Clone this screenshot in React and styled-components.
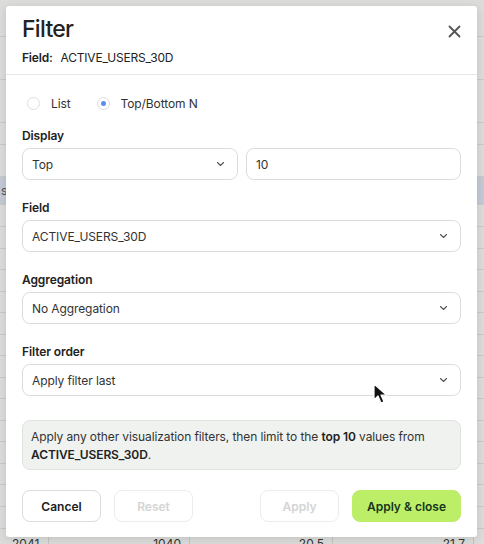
import styled, { createGlobalStyle } from "styled-components";

const GlobalStyle = createGlobalStyle`
  html, body {
    margin: 0;
    padding: 0;
    background: #dcddda;
    font-family: Inter, "Noto Sans", sans-serif;
    -webkit-font-smoothing: antialiased;
  }
  * { box-sizing: border-box; }
`;

// the data table that sits behind the dimmed overlay
const rowHeights = [37, 43, 43, 22, 32, 28, 22, 22, 21, 22, 21, 22, 21, 22, 21, 22, 21, 22, 21, 22, 22];

const Page = styled.div`
  position: relative;
  width: 484px;
  height: 544px;
  overflow: hidden;
  background: #dcddda;
`;

const Table = styled.div`
  display: flex;
  flex-direction: column;
  width: 100%;
`;

const TableRow = styled.div`
  height: ${(p) => p.$h}px;
  flex-shrink: 0;
  border-bottom: 1px solid #cacbc7;
  background: ${(p) => (p.$selected ? "#c4cad6" : "transparent")};
  font-size: 12px;
  color: #555;
  padding-left: 1px;
  display: flex;
  align-items: center;
`;

const FootRow = styled.div`
  position: absolute;
  left: 0;
  top: 532px;
  display: grid;
  grid-template-columns: 49px 141px 143px 141px 10px;
  height: 20px;
  font-size: 12px;
  color: #333;
`;

const FootCell = styled.div`
  border-right: 1px solid #c4c5c1;
  text-align: ${(p) => (p.$left ? "left" : "right")};
  padding: 4px 8px 0 12px;
`;

const Modal = styled.div`
  position: absolute;
  left: 6px;
  top: 6px;
  width: 471px;
  height: 531px;
  background: #fff;
  border-radius: 3px;
  box-shadow: 0 2px 10px rgba(0, 0, 0, 0.12);
  display: flex;
  flex-direction: column;
`;

const Header = styled.div`
  position: relative;
  padding: 8px 16px 8px;
  border-bottom: 1px solid #e6e6e6;
`;

const Title = styled.h1`
  margin: 0;
  font-size: 23px;
  line-height: 30px;
  font-weight: 500;
  color: #222;
  letter-spacing: -0.7px;
`;

const FieldLine = styled.div`
  margin-top: 6px;
  font-size: 12px;
  line-height: 16px;
  color: #222;
  display: flex;
  gap: 8px;
  letter-spacing: -0.2px;

  b {
    font-weight: 600;
  }
`;

const CloseButton = styled.button`
  position: absolute;
  right: 14px;
  top: 16px;
  width: 18px;
  height: 18px;
  padding: 0;
  border: none;
  background: transparent;
  display: flex;
  align-items: center;
  justify-content: center;
  cursor: pointer;
`;

const Body = styled.div`
  padding: 18px 16px 15px;
  display: flex;
  flex-direction: column;
  flex: 1;
  font-size: 12px;
  letter-spacing: -0.1px;
`;

const RadioRow = styled.div`
  display: flex;
  align-items: center;
  height: 20px;
  padding-left: 5px;
  gap: 26px;
  margin-bottom: 15px;
`;

const RadioOption = styled.label`
  display: flex;
  align-items: center;
  gap: 11px;
  font-size: 12px;
  color: #333;
`;

const RadioDot = styled.span`
  width: 13px;
  height: 13px;
  border-radius: 50%;
  border: 1px solid #dedede;
  background: #fff;
  display: flex;
  align-items: center;
  justify-content: center;

  &::after {
    content: "";
    width: 5px;
    height: 5px;
    border-radius: 50%;
    background: ${(p) => (p.$checked ? "#5b8ef0" : "transparent")};
  }
`;

const Group = styled.div`
  display: flex;
  flex-direction: column;
  gap: 4px;
  margin-bottom: 20px;
`;

const Label = styled.div`
  font-size: 12px;
  line-height: 16px;
  font-weight: 600;
  color: #222;
`;

const InputRow = styled.div`
  display: grid;
  grid-template-columns: 216px 215px;
  gap: 8px;
`;

const SelectBox = styled.div`
  height: 32px;
  border: 1px solid #dcdcdc;
  border-radius: 8px;
  padding: 0 12px 0 9px;
  display: flex;
  align-items: center;
  justify-content: space-between;
  font-size: 12px;
  color: #333;
  background: #fff;
`;

const Note = styled.div`
  margin-top: 4px;
  border: 1px solid #e0e2de;
  background: #f0f2ef;
  border-radius: 8px;
  padding: 7px 8px 5px;
  font-size: 12px;
  line-height: 18px;
  color: #333;

  b {
    font-weight: 600;
    color: #222;
  }
`;

const Footer = styled.div`
  margin-top: 20px;
  display: flex;
  gap: 13px;
`;

const Spacer = styled.div`
  flex: 1;
`;

const Button = styled.button`
  height: 32px;
  width: ${(p) => p.$w || 79}px;
  border-radius: 8px;
  font-family: inherit;
  font-size: 12px;
  font-weight: 600;
  padding: 0;
  border: 1px solid ${(p) => (p.$primary ? "#bdee68" : p.$disabled ? "#ececec" : "#dcdcdc")};
  background: ${(p) => (p.$primary ? "#bdee68" : "#fff")};
  color: ${(p) => (p.$primary ? "#15361b" : p.$disabled ? "#d4d4d4" : "#222")};
  cursor: ${(p) => (p.$disabled ? "default" : "pointer")};
`;

const Pointer = styled.svg`
  position: absolute;
  left: 373px;
  top: 383px;
`;

function Chevron() {
  return (
    <svg width="9" height="6" viewBox="0 0 9 6">
      <path d="M1.5 1.5l3 3 3-3" fill="none" stroke="#555" strokeWidth="1.1" strokeLinecap="round" strokeLinejoin="round" />
    </svg>
  );
}

function Select({ value }) {
  return (
    <SelectBox>
      <span>{value}</span>
      <Chevron />
    </SelectBox>
  );
}

export default function App() {
  return (
    <Page>
      <GlobalStyle />
      <Table>
        {rowHeights.map((h, i) => (
          <TableRow key={i} $h={h} $selected={i === 5}>
            {i === 5 ? "s..." : ""}
          </TableRow>
        ))}
      </Table>
      <FootRow>
        <FootCell $left>2041</FootCell>
        <FootCell>1040</FootCell>
        <FootCell>20.5</FootCell>
        <FootCell>21.7</FootCell>
      </FootRow>

      <Modal>
        <Header>
          <Title>Filter</Title>
          <FieldLine>
            <b>Field:</b>
            <span>ACTIVE_USERS_30D</span>
          </FieldLine>
          <CloseButton aria-label="Close">
            <svg width="13" height="13" viewBox="0 0 13 13">
              <path d="M1.5 1.5l10 10M11.5 1.5l-10 10" stroke="#555" strokeWidth="1.8" strokeLinecap="round" />
            </svg>
          </CloseButton>
        </Header>

        <Body>
          <RadioRow>
            <RadioOption>
              <RadioDot />
              List
            </RadioOption>
            <RadioOption>
              <RadioDot $checked />
              Top/Bottom N
            </RadioOption>
          </RadioRow>

          <Group>
            <Label>Display</Label>
            <InputRow>
              <Select value="Top" />
              <SelectBox>10</SelectBox>
            </InputRow>
          </Group>

          <Group>
            <Label>Field</Label>
            <Select value="ACTIVE_USERS_30D" />
          </Group>

          <Group>
            <Label>Aggregation</Label>
            <Select value="No Aggregation" />
          </Group>

          <Group>
            <Label>Filter order</Label>
            <Select value="Apply filter last" />
          </Group>

          <Note>
            Apply any other visualization filters, then limit to the <b>top 10</b> values from{" "}
            <b>ACTIVE_USERS_30D</b>.
          </Note>

          <Footer>
            <Button>Cancel</Button>
            <Button $disabled>Reset</Button>
            <Spacer />
            <Button $disabled>Apply</Button>
            <Button $primary $w={109}>Apply &amp; close</Button>
          </Footer>
        </Body>
      </Modal>

      <Pointer width="14" height="22" viewBox="0 0 14 22">
        <path d="M1 1v16l4-4 3 7 3-1.3-3-6.7h5.5z" fill="#111" stroke="#fff" strokeWidth="1.2" strokeLinejoin="round" />
      </Pointer>
    </Page>
  );
}
